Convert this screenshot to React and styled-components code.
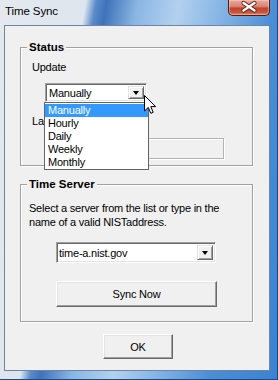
import React from "react";
import styled, { createGlobalStyle } from "styled-components";

const GlobalStyle = createGlobalStyle`
  html, body {
    margin: 0;
    padding: 0;
    background: #2f6fb5;
  }
  body {
    font-family: "Liberation Sans", Arial, sans-serif;
    font-size: 11px;
    color: #000;
  }
  * {
    box-sizing: border-box;
  }
`;

const Window = styled.div`
  width: 278px;
  height: 380px;
  display: flex;
  flex-direction: column;
  overflow: hidden;
  background: linear-gradient(
    100deg,
    #e4e9ef 0%,
    #dde5ee 25%,
    #5a8aca 28%,
    #3f72b9 31%,
    #8ab6e3 40%,
    #b3d1ef 52%,
    #80b1e4 66%,
    #4b8ed6 80%,
    #3a82d2 100%
  );
  box-shadow: inset -1px -1px 0 #1c4a7c;
`;

const TitleBar = styled.div`
  height: 25px;
  flex: none;
  display: flex;
  align-items: flex-start;
  padding-left: 5px;
`;

const Title = styled.span`
  margin-top: 5px;
  font-size: 11.5px;
  line-height: 13px;
  letter-spacing: -0.1px;
`;

const CloseButton = styled.div`
  margin-left: auto;
  margin-right: 8px;
  width: 42px;
  height: 16px;
  border: 1px solid #5a170c;
  border-top: none;
  border-radius: 0 0 5px 5px;
  background: linear-gradient(
    180deg,
    #e8aa9c 0%,
    #da8574 42%,
    #c0452e 55%,
    #c3543c 80%,
    #de8266 100%
  );
  box-shadow: inset 0 0 0 1px rgba(255, 220, 210, 0.45);
`;

const Client = styled.div`
  flex: 1;
  margin: 0 8px 9px 4px;
  background: #f0f0f0;
  border: 1px solid #6f84a0;
  padding: 15px 16px 0 15px;
  display: flex;
  flex-direction: column;
  position: relative;
`;

const GroupBox = styled.fieldset`
  margin: ${(p) => p.$top}px 0 0;
  padding: 0;
  min-inline-size: 0;
  border: 1px solid #a0a0a0;
  box-shadow: inset 1px 1px 0 #fff, 1px 1px 0 #fff;
`;

const Legend = styled.legend`
  margin-left: 6px;
  padding: 0 2px;
  font-size: 11.5px;
  line-height: 12px;
  font-weight: bold;
  background: #f0f0f0;
`;

const GroupBody = styled.div`
  display: flex;
  flex-direction: column;
  align-items: flex-start;
  padding: ${(p) => p.$pad};
`;

const Label = styled.div`
  margin-top: ${(p) => p.$top || 0}px;
  line-height: ${(p) => p.$lh || 13}px;
  letter-spacing: -0.22px;
  white-space: nowrap;
`;

const Combo = styled.div`
  position: relative;
  display: flex;
  margin: ${(p) => p.$top}px 0 0 ${(p) => p.$left}px;
  width: ${(p) => p.$w}px;
  height: ${(p) => p.$h}px;
  padding: 2px;
  background: #fff;
  border: 1px solid;
  border-color: #a0a0a0 #ffffff #ffffff #a0a0a0;
  box-shadow: inset 1px 1px 0 #696969, inset -1px -1px 0 #e3e3e3;
`;

const ComboText = styled.span`
  flex: 1;
  padding-left: ${(p) => p.$indent}px;
  display: flex;
  align-items: center;
  letter-spacing: -0.22px;
  white-space: nowrap;
`;

const ArrowButton = styled.span`
  flex: none;
  width: 16px;
  height: 100%;
  display: flex;
  align-items: center;
  justify-content: center;
  background: #f0f0f0;
  border: 1px solid;
  border-color: #e3e3e3 #696969 #696969 #e3e3e3;
  box-shadow: inset 1px 1px 0 #fff, inset -1px -1px 0 #a0a0a0;

  &::after {
    content: "";
    width: 0;
    height: 0;
    border-left: 3.5px solid transparent;
    border-right: 3.5px solid transparent;
    border-top: 4px solid #000;
    margin-top: 1px;
  }
`;

const DropList = styled.ul`
  position: absolute;
  top: calc(100% + 1px);
  left: -2px;
  width: 105px;
  margin: 0;
  padding: 1px 0 0;
  list-style: none;
  background: #fff;
  border: 1px solid #646464;
  z-index: 2;
`;

const DropItem = styled.li`
  height: 13px;
  line-height: 13px;
  padding-left: 3px;
  letter-spacing: -0.22px;
  background: ${(p) => (p.$selected ? "#3399ff" : "transparent")};
  color: ${(p) => (p.$selected ? "#fff" : "#000")};
`;

const Cursor = styled.svg`
  position: absolute;
  left: 98px;
  top: 11px;
  z-index: 3;
`;

const ReadOnlyBox = styled.div`
  margin: ${(p) => p.$top}px 0 0 ${(p) => p.$left}px;
  width: ${(p) => p.$w}px;
  height: 21px;
  background: #f0f0f0;
  border: 1px solid #b4b4b4;
  box-shadow: inset 1px 1px 0 #fff, 1px 1px 0 #fff;
`;

const PushButton = styled.button`
  margin: ${(p) => p.$top || 0}px 0 0 ${(p) => p.$left || 0}px;
  width: ${(p) => p.$w}px;
  height: ${(p) => p.$h}px;
  padding: 0;
  font-family: inherit;
  font-size: 11px;
  letter-spacing: -0.2px;
  color: #000;
  background: #f0f0f0;
  border: 1px solid;
  border-color: #ffffff #696969 #696969 #ffffff;
  box-shadow: inset -1px -1px 0 #a0a0a0, inset 1px 1px 0 #e3e3e3;
`;

const Footer = styled.div`
  display: flex;
  justify-content: center;
  padding-left: 3px;
  margin-top: 12px;
`;

const options = ["Manually", "Hourly", "Daily", "Weekly", "Monthly"];

export default function App() {
  return (
    <>
      <GlobalStyle />
      <Window>
        <TitleBar>
          <Title>Time Sync</Title>
          <CloseButton>
            <svg width="40" height="15" viewBox="0 0 40 15">
              <path
                d="M14.5 3 L25.5 10.5 M25.5 3 L14.5 10.5"
                stroke="#6a1d12"
                strokeWidth="4.2"
                strokeLinecap="round"
              />
              <path
                d="M14.5 3 L25.5 10.5 M25.5 3 L14.5 10.5"
                stroke="#fff"
                strokeWidth="2.4"
                strokeLinecap="round"
              />
            </svg>
          </CloseButton>
        </TitleBar>
        <Client>
          <GroupBox $top={0}>
            <Legend>Status</Legend>
            <GroupBody $pad="8px 0 6px 11px">
              <Label>Update</Label>
              <Combo $top={9} $left={13} $w={102} $h={19}>
                <ComboText $indent={1}>Manually</ComboText>
                <ArrowButton />
                <DropList>
                  {options.map((o, i) => (
                    <DropItem key={o} $selected={i === 0}>
                      {o}
                    </DropItem>
                  ))}
                </DropList>
                <Cursor width="13" height="20" viewBox="0 0 13 20">
                  <path
                    d="M0.5 0.5 L0.5 16 L4.3 12.4 L6.8 18.3 L9.2 17.3 L6.8 11.6 L11.6 11.6 Z"
                    fill="#fff"
                    stroke="#000"
                    strokeWidth="1"
                    strokeLinejoin="miter"
                  />
                </Cursor>
              </Combo>
              <Label $top={13}>Last Sync:</Label>
              <ReadOnlyBox $top={10} $left={28} $w={164} />
            </GroupBody>
          </GroupBox>
          <GroupBox $top={12}>
            <Legend>Time Server</Legend>
            <GroupBody $pad="11px 0 14px 8px">
              <Label $lh={14}>
                Select a server from the list or type in the
                <br />
                name of a valid NISTaddress.
              </Label>
              <Combo $top={13} $left={27} $w={160} $h={21}>
                <ComboText $indent={0}>time-a.nist.gov</ComboText>
                <ArrowButton />
              </Combo>
              <PushButton $top={18} $left={27} $w={161} $h={26}>
                Sync Now
              </PushButton>
            </GroupBody>
          </GroupBox>
          <Footer>
            <PushButton $w={70} $h={25}>
              OK
            </PushButton>
          </Footer>
        </Client>
      </Window>
    </>
  );
}
